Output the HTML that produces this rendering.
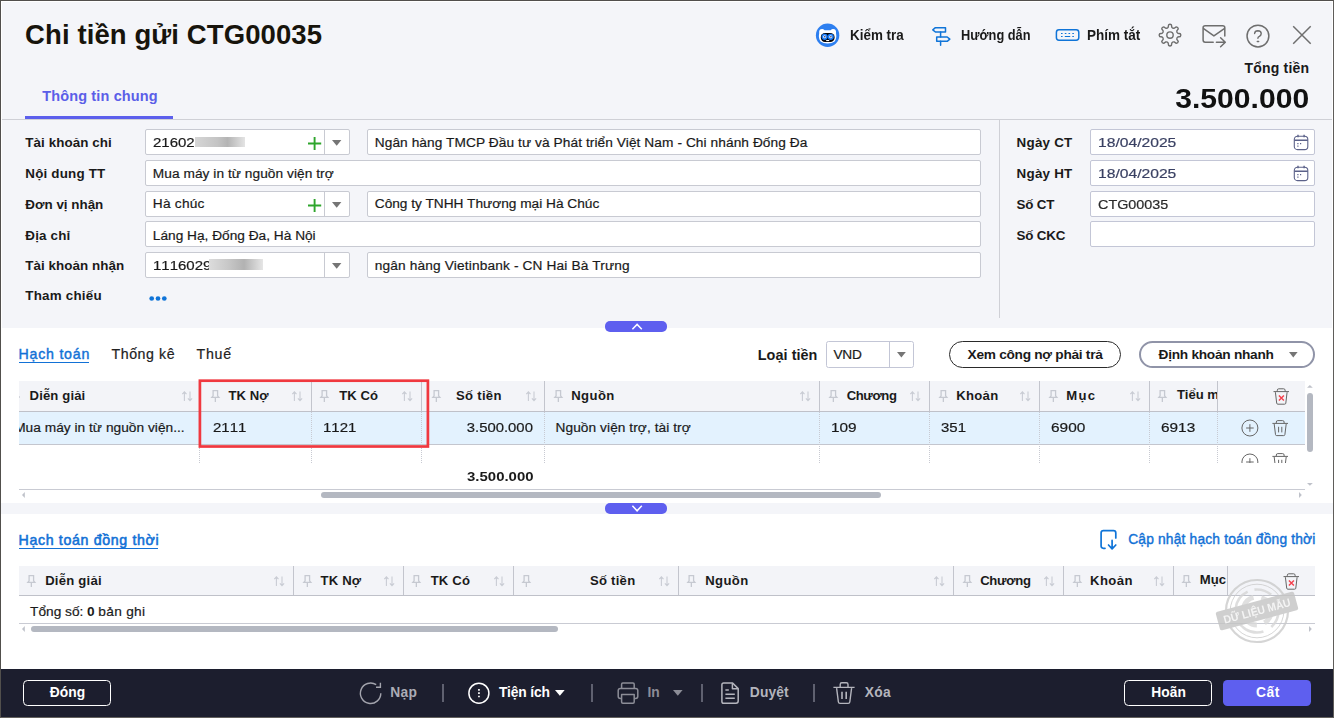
<!DOCTYPE html>
<html lang="vi">
<head>
<meta charset="utf-8">
<title>Chi tiền gửi CTG00035</title>
<style>
*{box-sizing:border-box;margin:0;padding:0}
html,body{width:1334px;height:718px;overflow:hidden;background:#fff}
body{font-family:"Liberation Sans",sans-serif;font-size:14px;color:#1a1a1a;position:relative}
.t{position:absolute;white-space:nowrap;height:20px;line-height:20px}
.n{-webkit-text-stroke:.2px}
.a{position:absolute}
.inp{position:absolute;height:26px;background:#fff;border:1px solid #c8cad2;border-radius:2px}
.ln{position:absolute;background:#c6c8d0}
svg{position:absolute;overflow:visible}
#frame{position:absolute;left:0;top:0;width:1334px;height:718px;border:1px solid #514f4c;border-right-color:#5f5d5a;border-bottom-color:#63615e;z-index:50}
#top{position:absolute;left:1px;top:1px;width:1332px;height:327px;background:#f4f5f9;border:1px solid #fff;border-bottom:none}
</style>
</head>
<body>
<div id="top"></div>
<div class="t" style="top:25px;font-size:27.5px;font-weight:bold;color:#17140c;letter-spacing:0.10px;left:25.09px;">Chi tiền gửi CTG00035</div>
<div class="t" style="top:25px;font-size:14px;font-weight:bold;left:850.39px;transform:scaleX(0.9588);transform-origin:0 50%;">Kiểm tra</div>
<div class="t" style="top:25px;font-size:14px;font-weight:bold;left:961.09px;transform:scaleX(0.9136);transform-origin:0 50%;">Hướng dẫn</div>
<div class="t" style="top:25px;font-size:14px;font-weight:bold;left:1087.19px;transform:scaleX(0.9653);transform-origin:0 50%;">Phím tắt</div>
<div class="t" style="top:58px;font-size:14px;font-weight:bold;letter-spacing:0.19px;right:24.81px;">Tổng tiền</div>
<div class="t" style="top:89px;font-size:27px;font-weight:bold;color:#111;right:24.75px;font-kerning:none;transform:scaleX(1.1143);transform-origin:100% 50%;">3.500.000</div>
<div class="t" style="top:86px;font-size:14.5px;font-weight:bold;color:#5b5ee8;letter-spacing:0.14px;left:42.18px;">Thông tin chung</div>
<div class="a" style="left:25px;top:116px;width:148px;height:3px;background:#5c5fec"></div>
<div class="ln" style="left:2px;top:119px;width:1330px;height:1px;background:#cfd0d6"></div>
<div class="t" style="top:133px;font-size:13.4px;font-weight:bold;letter-spacing:0.07px;left:25.30px;">Tài khoản chi</div>
<div class="t" style="top:164px;font-size:13.4px;font-weight:bold;letter-spacing:0.18px;left:25.30px;">Nội dung TT</div>
<div class="t" style="top:195px;font-size:13.4px;font-weight:bold;left:25.30px;">Đơn vị nhận</div>
<div class="t" style="top:226px;font-size:13.4px;font-weight:bold;letter-spacing:0.19px;left:25.30px;">Địa chỉ</div>
<div class="t" style="top:256px;font-size:13.4px;font-weight:bold;letter-spacing:0.06px;left:25.30px;">Tài khoản nhận</div>
<div class="t" style="top:286px;font-size:13.4px;font-weight:bold;letter-spacing:0.21px;left:25.30px;">Tham chiếu</div>
<div class="inp" style="left:145px;top:129px;width:205px;height:26px;border-color:#c8cad2"></div>
<div class="inp" style="left:367px;top:129px;width:614px;height:26px;border-color:#c8cad2"></div>
<div class="inp" style="left:145px;top:160px;width:836px;height:26px;border-color:#c8cad2"></div>
<div class="inp" style="left:145px;top:191px;width:205px;height:26px;border-color:#c8cad2"></div>
<div class="inp" style="left:367px;top:191px;width:614px;height:26px;border-color:#c8cad2"></div>
<div class="inp" style="left:145px;top:221.4px;width:836px;height:26px;border-color:#c8cad2"></div>
<div class="inp" style="left:145px;top:252px;width:205px;height:26px;border-color:#c8cad2"></div>
<div class="inp" style="left:367px;top:252px;width:614px;height:26px;border-color:#c8cad2"></div>
<div class="ln" style="left:324px;top:129px;width:1px;height:26px;background:#c8cad2"></div>
<svg style="left:331.5px;top:140.2px" width="10" height="6"><path d="M0 0H9.4L4.7 5.8Z" fill="#757575"/></svg>
<div class="ln" style="left:324px;top:191px;width:1px;height:26px;background:#c8cad2"></div>
<svg style="left:331.5px;top:202.2px" width="10" height="6"><path d="M0 0H9.4L4.7 5.8Z" fill="#757575"/></svg>
<div class="ln" style="left:324px;top:252px;width:1px;height:26px;background:#c8cad2"></div>
<svg style="left:331.5px;top:263.2px" width="10" height="6"><path d="M0 0H9.4L4.7 5.8Z" fill="#757575"/></svg>
<svg style="left:307px;top:135.6px" width="15" height="15"><path d="M7.6 0.9V14.1M1 7.5H14.2" stroke="#2ea52c" stroke-width="1.9" fill="none"/></svg>
<svg style="left:307px;top:197.6px" width="15" height="15"><path d="M7.6 0.9V14.1M1 7.5H14.2" stroke="#2ea52c" stroke-width="1.9" fill="none"/></svg>
<div class="t n" style="top:133px;font-size:13.7px;left:152.85px;font-kerning:none;transform:scaleX(1.0955);transform-origin:0 50%;">21602</div>
<div class="a" style="left:195px;top:137px;width:50px;height:10px;background:linear-gradient(90deg,#d6d6d6,#c4c4c4 45%,#b4b4b4 65%,#e4e4e4);filter:blur(.6px)"></div>
<div class="t n" style="top:133px;font-size:13.7px;letter-spacing:0.08px;left:374.75px;">Ngân hàng TMCP Đầu tư và Phát triển Việt Nam - Chi nhánh Đống Đa</div>
<div class="t n" style="top:164px;font-size:13.7px;letter-spacing:0.05px;left:152.85px;">Mua máy in từ nguồn viện trợ</div>
<div class="t n" style="top:194px;font-size:13.7px;letter-spacing:0.23px;left:152.85px;">Hà chúc</div>
<div class="t n" style="top:194px;font-size:13.7px;left:374.75px;">Công ty TNHH Thương mại Hà Chúc</div>
<div class="t n" style="top:226px;font-size:13.7px;left:152.85px;">Láng Hạ, Đống Đa, Hà Nội</div>
<div class="t n" style="top:256px;font-size:13.7px;left:153.15px;font-kerning:none;transform:scaleX(1.0957);transform-origin:0 50%;">1116029</div>
<div class="a" style="left:209px;top:259px;width:54px;height:11px;background:linear-gradient(90deg,#dcdcdc,#c8c8c8 35%,#b2b2b2 65%,#e6e6e6);filter:blur(.6px)"></div>
<div class="t n" style="top:256px;font-size:13.7px;letter-spacing:0.15px;left:374.75px;">ngân hàng Vietinbank - CN Hai Bà Trưng</div>
<svg style="left:148px;top:294px" width="22" height="10"><circle cx="3.7" cy="4.5" r="2.35" fill="#0f74d8"/><circle cx="10" cy="4.5" r="2.35" fill="#0f74d8"/><circle cx="16.3" cy="4.5" r="2.35" fill="#0f74d8"/></svg>
<div class="ln" style="left:999px;top:120px;width:1px;height:197.5px;background:#cfd0d6"></div>
<div class="t" style="top:133px;font-size:13.4px;font-weight:bold;letter-spacing:0.22px;left:1016.60px;">Ngày CT</div>
<div class="t" style="top:164px;font-size:13.4px;font-weight:bold;letter-spacing:0.22px;left:1016.60px;">Ngày HT</div>
<div class="t" style="top:195px;font-size:13.4px;font-weight:bold;letter-spacing:-0.23px;left:1016.60px;">Số CT</div>
<div class="t" style="top:226px;font-size:13.4px;font-weight:bold;letter-spacing:-0.21px;left:1016.60px;">Số CKC</div>
<div class="inp" style="left:1090px;top:129px;width:225px;height:26px;border-color:#c3c6d6"></div>
<div class="inp" style="left:1090px;top:160px;width:225px;height:26px;border-color:#c3c6d6"></div>
<div class="inp" style="left:1090px;top:191px;width:225px;height:26px;border-color:#c3c6d6"></div>
<div class="inp" style="left:1090px;top:221.4px;width:225px;height:26px;border-color:#c3c6d6"></div>
<div class="t n" style="top:133px;font-size:13.7px;color:#3a4163;left:1097.55px;font-kerning:none;transform:scaleX(1.1427);transform-origin:0 50%;">18/04/2025</div>
<div class="t n" style="top:164px;font-size:13.7px;color:#3a4163;left:1097.55px;font-kerning:none;transform:scaleX(1.1427);transform-origin:0 50%;">18/04/2025</div>
<div class="t n" style="top:195px;font-size:13.7px;color:#2a2a2a;left:1097.55px;transform:scaleX(1.0497);transform-origin:0 50%;">CTG00035</div>
<svg style="left:1293px;top:134px" width="16" height="17" fill="none" stroke="#5b6189" stroke-width="1.1"><rect x="1.3" y="2.2" width="13.5" height="13.4" rx="3.2"/><path d="M1.3 6.3H14.8M5 0.8V3.2M11.1 0.8V3.2" stroke-width="1.4"/><path d="M4.3 9.6h1.2M7 9.6h1.2M4.3 12.2h1.2" stroke-width="1.3"/></svg>
<svg style="left:1293px;top:165px" width="16" height="17" fill="none" stroke="#5b6189" stroke-width="1.1"><rect x="1.3" y="2.2" width="13.5" height="13.4" rx="3.2"/><path d="M1.3 6.3H14.8M5 0.8V3.2M11.1 0.8V3.2" stroke-width="1.4"/><path d="M4.3 9.6h1.2M7 9.6h1.2M4.3 12.2h1.2" stroke-width="1.3"/></svg>
<div class="a" style="left:605px;top:320.6px;width:62px;height:11.4px;border-radius:5px;background:#5e5fef"></div>
<svg style="left:631px;top:322px" width="12" height="9"><path d="M1.4 7.2L6.1 2.4L10.8 7.2" fill="none" stroke="#fff" stroke-width="1.5"/></svg>
<div class="a" style="left:1px;top:502.6px;width:1332px;height:11.2px;background:#f4f5f9"></div>
<div class="a" style="left:605px;top:502.7px;width:62px;height:11.3px;border-radius:5px;background:#5e5fef"></div>
<svg style="left:631px;top:504px" width="12" height="9"><path d="M1.4 1.8L6.1 6.8L10.8 1.8" fill="none" stroke="#fff" stroke-width="1.5"/></svg>
<div class="t n" style="top:344px;font-size:14.2px;color:#1271d6;letter-spacing:0.76px;left:18.53px;-webkit-text-stroke:0.4px #1271d6;">Hạch toán</div>
<div class="a" style="left:19px;top:362px;width:70px;height:1px;background:#1271d6"></div>
<div class="t n" style="top:344px;font-size:14.2px;color:#222;letter-spacing:0.55px;left:111.53px;">Thống kê</div>
<div class="t n" style="top:344px;font-size:14.2px;color:#222;letter-spacing:0.80px;left:196.43px;">Thuế</div>
<div class="t" style="top:345px;font-size:14.4px;font-weight:bold;letter-spacing:0.06px;left:757.78px;">Loại tiền</div>
<div class="inp" style="left:826px;top:341px;width:88px;height:27px;border-color:#c3c6d6;border-radius:2.5px"></div>
<div class="ln" style="left:889px;top:341px;width:1px;height:27px;background:#c3c6d6"></div>
<svg style="left:896.6px;top:352.4px" width="10" height="6"><path d="M0 0H8.8L4.4 5.6Z" fill="#757575"/></svg>
<div class="t n" style="top:345px;font-size:13.7px;letter-spacing:-0.21px;left:833.45px;">VND</div>
<div class="a" style="left:949px;top:341px;width:171.6px;height:26.6px;border:1.1px solid #2a2a2a;border-radius:14px;background:#fff"></div>
<div class="t" style="top:345px;font-size:13.7px;font-weight:bold;letter-spacing:-0.28px;left:967.59px;-webkit-text-stroke:0;">Xem công nợ phải trả</div>
<div class="a" style="left:1139px;top:340.8px;width:175.6px;height:27px;border:2px solid #9094a8;border-radius:14px;background:#fff"></div>
<div class="t" style="top:345px;font-size:13.7px;font-weight:bold;letter-spacing:-0.27px;left:1158.59px;">Định khoản nhanh</div>
<svg style="left:1289px;top:351.8px" width="10" height="6"><path d="M0 0H8.6L4.3 5.6Z" fill="#757575"/></svg>
<div class="a" style="left:19px;top:381px;width:1286px;height:30px;background:#f3f4f8"></div>
<div class="a" style="left:19px;top:411.6px;width:1286px;height:32.4px;background:#e3f2fe"></div>
<div class="ln" style="left:19px;top:411px;width:1286px;height:1px;background:#bfc1c9"></div>
<div class="ln" style="left:19px;top:444px;width:1286px;height:1px;background:#c4c6ce"></div>
<div class="ln" style="left:19px;top:489px;width:1286px;height:1px;background:#c9cbd3"></div>
<div class="ln" style="left:199.0px;top:381px;width:1px;height:30px;background:#c3c5cd"></div>
<div class="a" style="left:199.0px;top:412px;width:0;height:51px;border-left:1px dotted #c8cad2"></div>
<div class="ln" style="left:311.0px;top:381px;width:1px;height:30px;background:#c3c5cd"></div>
<div class="a" style="left:311.0px;top:412px;width:0;height:51px;border-left:1px dotted #c8cad2"></div>
<div class="ln" style="left:420.8px;top:381px;width:1px;height:30px;background:#c3c5cd"></div>
<div class="a" style="left:420.8px;top:412px;width:0;height:51px;border-left:1px dotted #c8cad2"></div>
<div class="ln" style="left:543.6px;top:381px;width:1px;height:30px;background:#c3c5cd"></div>
<div class="a" style="left:543.6px;top:412px;width:0;height:51px;border-left:1px dotted #c8cad2"></div>
<div class="ln" style="left:819.2px;top:381px;width:1px;height:30px;background:#c3c5cd"></div>
<div class="a" style="left:819.2px;top:412px;width:0;height:51px;border-left:1px dotted #c8cad2"></div>
<div class="ln" style="left:928.7px;top:381px;width:1px;height:30px;background:#c3c5cd"></div>
<div class="a" style="left:928.7px;top:412px;width:0;height:51px;border-left:1px dotted #c8cad2"></div>
<div class="ln" style="left:1038.9px;top:381px;width:1px;height:30px;background:#c3c5cd"></div>
<div class="a" style="left:1038.9px;top:412px;width:0;height:51px;border-left:1px dotted #c8cad2"></div>
<div class="ln" style="left:1148.8px;top:381px;width:1px;height:30px;background:#c3c5cd"></div>
<div class="a" style="left:1148.8px;top:412px;width:0;height:51px;border-left:1px dotted #c8cad2"></div>
<div class="ln" style="left:1217.0px;top:381px;width:1px;height:30px;background:#c3c5cd"></div>
<div class="a" style="left:1217.0px;top:412px;width:0;height:51px;border-left:1px dotted #c8cad2"></div>
<div class="t" style="top:386px;font-size:13.1px;font-weight:bold;letter-spacing:0.13px;left:29.60px;">Diễn giải</div>
<svg style="left:182px;top:391px" width="11" height="11" fill="none" stroke="#c9ccd4" stroke-width="1.1"><path d="M2.4 10V1M0.3 3.2L2.4 0.9L4.5 3.2M8 0.4V9.6M5.9 7.3L8 9.7L10.1 7.3"/></svg>
<svg style="left:210.8px;top:390px" width="9" height="13" fill="none" stroke="#c6c9d1" stroke-width="1.3"><path d="M2.1 0.6H6.6V5.8L7.9 7.4H0.8L2.1 5.8ZM4.35 7.4V12"/></svg>
<div class="t" style="top:386px;font-size:13.1px;font-weight:bold;letter-spacing:0.05px;left:228.40px;">TK Nợ</div>
<svg style="left:292px;top:391px" width="11" height="11" fill="none" stroke="#c9ccd4" stroke-width="1.1"><path d="M2.4 10V1M0.3 3.2L2.4 0.9L4.5 3.2M8 0.4V9.6M5.9 7.3L8 9.7L10.1 7.3"/></svg>
<svg style="left:320.4px;top:390px" width="9" height="13" fill="none" stroke="#c6c9d1" stroke-width="1.3"><path d="M2.1 0.6H6.6V5.8L7.9 7.4H0.8L2.1 5.8ZM4.35 7.4V12"/></svg>
<div class="t" style="top:386px;font-size:13.1px;font-weight:bold;letter-spacing:0.05px;left:339.30px;">TK Có</div>
<svg style="left:402.2px;top:391px" width="11" height="11" fill="none" stroke="#c9ccd4" stroke-width="1.1"><path d="M2.4 10V1M0.3 3.2L2.4 0.9L4.5 3.2M8 0.4V9.6M5.9 7.3L8 9.7L10.1 7.3"/></svg>
<svg style="left:431.5px;top:390px" width="9" height="13" fill="none" stroke="#c6c9d1" stroke-width="1.3"><path d="M2.1 0.6H6.6V5.8L7.9 7.4H0.8L2.1 5.8ZM4.35 7.4V12"/></svg>
<div class="t" style="top:386px;font-size:13.1px;font-weight:bold;letter-spacing:0.30px;left:456.00px;">Số tiền</div>
<svg style="left:525.6px;top:391px" width="11" height="11" fill="none" stroke="#c9ccd4" stroke-width="1.1"><path d="M2.4 10V1M0.3 3.2L2.4 0.9L4.5 3.2M8 0.4V9.6M5.9 7.3L8 9.7L10.1 7.3"/></svg>
<svg style="left:554px;top:390px" width="9" height="13" fill="none" stroke="#c6c9d1" stroke-width="1.3"><path d="M2.1 0.6H6.6V5.8L7.9 7.4H0.8L2.1 5.8ZM4.35 7.4V12"/></svg>
<div class="t" style="top:386px;font-size:13.1px;font-weight:bold;letter-spacing:0.42px;left:571.20px;">Nguồn</div>
<svg style="left:800px;top:391px" width="11" height="11" fill="none" stroke="#c9ccd4" stroke-width="1.1"><path d="M2.4 10V1M0.3 3.2L2.4 0.9L4.5 3.2M8 0.4V9.6M5.9 7.3L8 9.7L10.1 7.3"/></svg>
<svg style="left:828.6px;top:390px" width="9" height="13" fill="none" stroke="#c6c9d1" stroke-width="1.3"><path d="M2.1 0.6H6.6V5.8L7.9 7.4H0.8L2.1 5.8ZM4.35 7.4V12"/></svg>
<div class="t" style="top:386px;font-size:13.1px;font-weight:bold;letter-spacing:-0.40px;left:846.70px;">Chương</div>
<svg style="left:910.2px;top:391px" width="11" height="11" fill="none" stroke="#c9ccd4" stroke-width="1.1"><path d="M2.4 10V1M0.3 3.2L2.4 0.9L4.5 3.2M8 0.4V9.6M5.9 7.3L8 9.7L10.1 7.3"/></svg>
<svg style="left:938.6px;top:390px" width="9" height="13" fill="none" stroke="#c6c9d1" stroke-width="1.3"><path d="M2.1 0.6H6.6V5.8L7.9 7.4H0.8L2.1 5.8ZM4.35 7.4V12"/></svg>
<div class="t" style="top:386px;font-size:13.1px;font-weight:bold;letter-spacing:0.28px;left:956.30px;">Khoản</div>
<svg style="left:1020px;top:391px" width="11" height="11" fill="none" stroke="#c9ccd4" stroke-width="1.1"><path d="M2.4 10V1M0.3 3.2L2.4 0.9L4.5 3.2M8 0.4V9.6M5.9 7.3L8 9.7L10.1 7.3"/></svg>
<svg style="left:1048.6px;top:390px" width="9" height="13" fill="none" stroke="#c6c9d1" stroke-width="1.3"><path d="M2.1 0.6H6.6V5.8L7.9 7.4H0.8L2.1 5.8ZM4.35 7.4V12"/></svg>
<div class="t" style="top:386px;font-size:13.1px;font-weight:bold;letter-spacing:1.23px;left:1066.30px;">Mục</div>
<svg style="left:1130.2px;top:391px" width="11" height="11" fill="none" stroke="#c9ccd4" stroke-width="1.1"><path d="M2.4 10V1M0.3 3.2L2.4 0.9L4.5 3.2M8 0.4V9.6M5.9 7.3L8 9.7L10.1 7.3"/></svg>
<svg style="left:1158px;top:390px" width="9" height="13" fill="none" stroke="#c6c9d1" stroke-width="1.3"><path d="M2.1 0.6H6.6V5.8L7.9 7.4H0.8L2.1 5.8ZM4.35 7.4V12"/></svg>
<div class="a" style="left:1170px;top:382px;width:47px;height:28px;overflow:hidden"><div class="t" style="top:3px;font-size:13.1px;font-weight:bold;left:7.00px;">Tiểu mục</div></div>
<div class="a" style="left:19px;top:396px;width:1px;height:2px;background:#d4d6dd"></div>
<div class="a" style="left:19px;top:414px;width:170px;height:28px;overflow:hidden"><div class="t n" style="top:4px;font-size:13.7px;letter-spacing:0.03px;left:-4.85px;">Mua máy in từ nguồn viện...</div></div>
<div class="t n" style="top:418px;font-size:13.7px;left:213.05px;font-kerning:none;transform:scaleX(1.0966);transform-origin:0 50%;">2111</div>
<div class="t n" style="top:418px;font-size:13.7px;left:322.85px;font-kerning:none;transform:scaleX(1.0934);transform-origin:0 50%;">1121</div>
<div class="t n" style="top:418px;font-size:13.7px;right:801.42px;font-kerning:none;transform:scaleX(1.0852);transform-origin:100% 50%;">3.500.000</div>
<div class="t n" style="top:418px;font-size:13.7px;letter-spacing:0.07px;left:555.55px;">Nguồn viện trợ, tài trợ</div>
<div class="t n" style="top:418px;font-size:13.7px;left:831.05px;font-kerning:none;transform:scaleX(1.1205);transform-origin:0 50%;">109</div>
<div class="t n" style="top:418px;font-size:13.7px;left:940.95px;font-kerning:none;transform:scaleX(1.0942);transform-origin:0 50%;">351</div>
<div class="t n" style="top:418px;font-size:13.7px;left:1050.55px;font-kerning:none;transform:scaleX(1.1262);transform-origin:0 50%;">6900</div>
<div class="t n" style="top:418px;font-size:13.7px;left:1160.75px;font-kerning:none;transform:scaleX(1.1229);transform-origin:0 50%;">6913</div>
<div class="t" style="top:467px;font-size:13.4px;font-weight:bold;right:800.13px;font-kerning:none;transform:scaleX(1.1174);transform-origin:100% 50%;">3.500.000</div>
<svg style="left:0;top:0" width="1334" height="718"><rect x="199.9" y="380.7" width="228" height="65.8" fill="none" stroke="#f0383f" stroke-width="2.7"/></svg>
<svg style="left:1272.8px;top:387.6px" width="17" height="18" fill="none" stroke="#666" stroke-width="1"><path d="M0.5 3.6H16M4.3 3.4V2.2Q4.3 0.8 5.8 0.8H10.6Q12.1 0.8 12.1 2.2V3.4M2.4 4.2L3.7 15.2Q3.8 16.2 4.9 16.2H11.6Q12.7 16.2 12.8 15.2L14.1 4.2"/><path d="M5.9 7.6L10.9 12.6M10.9 7.6L5.9 12.6" stroke="#f4404c" stroke-width="1.4"/></svg>
<svg style="left:1240.5px;top:419px" width="18" height="18" fill="none" stroke="#666" stroke-width="1"><circle cx="8.9" cy="9" r="8"/><path d="M8.9 5.2V12.8M5.1 9H12.7"/></svg>
<svg style="left:1271.8px;top:419.8px" width="17" height="17" fill="none" stroke="#666" stroke-width="1"><path d="M0.4 3.4H16M4.3 3.2V2Q4.3 0.6 5.8 0.6H10.6Q12.1 0.6 12.1 2V3.2M2.2 4L3.5 14.6Q3.6 15.6 4.7 15.6H11.7Q12.8 15.6 12.9 14.6L14.2 4M6.6 6.8V12.4M9.8 6.8V12.4"/></svg>
<div class="a" style="left:1236px;top:445px;width:60px;height:17.6px;overflow:hidden"><svg style="left:4.5px;top:7.8px" width="18" height="18" fill="none" stroke="#666" stroke-width="1"><circle cx="8.9" cy="9" r="8"/><path d="M8.9 5.2V12.8M5.1 9H12.7"/></svg><svg style="left:35.8px;top:8.4px" width="17" height="17" fill="none" stroke="#666" stroke-width="1"><path d="M0.4 3.4H16M4.3 3.2V2Q4.3 0.6 5.8 0.6H10.6Q12.1 0.6 12.1 2V3.2M2.2 4L3.5 14.6Q3.6 15.6 4.7 15.6H11.7Q12.8 15.6 12.9 14.6L14.2 4M6.6 6.8V12.4M9.8 6.8V12.4"/></svg></div>
<div class="a" style="left:1307.2px;top:393px;width:5.4px;height:59px;border-radius:3px;background:#b4b8c1"></div>
<svg style="left:1307px;top:385px" width="6" height="3"><path d="M0 2.8L2.9 0L5.8 2.8Z" fill="#bfc2ca"/></svg>
<svg style="left:1307px;top:483px" width="6" height="3"><path d="M0 0L2.9 2.8L5.8 0Z" fill="#bfc2ca"/></svg>
<div class="a" style="left:321.2px;top:492.2px;width:559.6px;height:5.6px;border-radius:3px;background:#b4b8c1"></div>
<svg style="left:21.6px;top:492px" width="3" height="6"><path d="M2.8 0L0 3L2.8 6Z" fill="#bfc2ca"/></svg>
<svg style="left:1299.4px;top:492px" width="3" height="6"><path d="M0 0L2.8 3L0 6Z" fill="#bfc2ca"/></svg>
<div class="t n" style="top:530px;font-size:14.2px;color:#1271d6;letter-spacing:0.65px;left:18.53px;-webkit-text-stroke:0.55px #1271d6;">Hạch toán đồng thời</div>
<div class="a" style="left:19px;top:548px;width:139px;height:1px;background:#1271d6"></div>
<svg style="left:1099px;top:529px" width="19" height="22" fill="none" stroke="#0f74d8" stroke-width="1.7" stroke-linecap="round" stroke-linejoin="round"><path d="M6 19.3H4.4Q2.1 19.3 2.1 17V3.9Q2.1 1.6 4.4 1.6H14.5Q16.8 1.6 16.8 3.9V9"/><path d="M13.1 11.4V19.6M9.5 16L13.1 19.8L16.8 16"/></svg>
<div class="t n" style="top:530px;font-size:13.8px;color:#1271d6;letter-spacing:0.18px;left:1128.15px;-webkit-text-stroke:0.4px #1271d6;">Cập nhật hạch toán đồng thời</div>
<div class="a" style="left:19px;top:566.3px;width:1296px;height:29px;background:#f3f4f8"></div>
<div class="ln" style="left:19px;top:595.3px;width:1296px;height:1px;background:#bfc1c9"></div>
<div class="ln" style="left:19px;top:623px;width:1296px;height:1px;background:#c9cbd3"></div>
<div class="ln" style="left:293.1px;top:566.3px;width:1px;height:29px;background:#c3c5cd"></div>
<div class="ln" style="left:403.1px;top:566.3px;width:1px;height:29px;background:#c3c5cd"></div>
<div class="ln" style="left:512.9px;top:566.3px;width:1px;height:29px;background:#c3c5cd"></div>
<div class="ln" style="left:678.1px;top:566.3px;width:1px;height:29px;background:#c3c5cd"></div>
<div class="ln" style="left:953.2px;top:566.3px;width:1px;height:29px;background:#c3c5cd"></div>
<div class="ln" style="left:1063.1px;top:566.3px;width:1px;height:29px;background:#c3c5cd"></div>
<div class="ln" style="left:1173.1px;top:566.3px;width:1px;height:29px;background:#c3c5cd"></div>
<div class="ln" style="left:1227.0px;top:566.3px;width:1px;height:29px;background:#c3c5cd"></div>
<svg style="left:27.4px;top:575px" width="9" height="13" fill="none" stroke="#c6c9d1" stroke-width="1.3"><path d="M2.1 0.6H6.6V5.8L7.9 7.4H0.8L2.1 5.8ZM4.35 7.4V12"/></svg>
<div class="t" style="top:571px;font-size:13.1px;font-weight:bold;letter-spacing:0.22px;left:45.20px;">Diễn giải</div>
<svg style="left:274.2px;top:576px" width="11" height="11" fill="none" stroke="#c9ccd4" stroke-width="1.1"><path d="M2.4 10V1M0.3 3.2L2.4 0.9L4.5 3.2M8 0.4V9.6M5.9 7.3L8 9.7L10.1 7.3"/></svg>
<svg style="left:302.6px;top:575px" width="9" height="13" fill="none" stroke="#c6c9d1" stroke-width="1.3"><path d="M2.1 0.6H6.6V5.8L7.9 7.4H0.8L2.1 5.8ZM4.35 7.4V12"/></svg>
<div class="t" style="top:571px;font-size:13.1px;font-weight:bold;letter-spacing:0.17px;left:320.60px;">TK Nợ</div>
<svg style="left:384.2px;top:576px" width="11" height="11" fill="none" stroke="#c9ccd4" stroke-width="1.1"><path d="M2.4 10V1M0.3 3.2L2.4 0.9L4.5 3.2M8 0.4V9.6M5.9 7.3L8 9.7L10.1 7.3"/></svg>
<svg style="left:412.4px;top:575px" width="9" height="13" fill="none" stroke="#c6c9d1" stroke-width="1.3"><path d="M2.1 0.6H6.6V5.8L7.9 7.4H0.8L2.1 5.8ZM4.35 7.4V12"/></svg>
<div class="t" style="top:571px;font-size:13.1px;font-weight:bold;letter-spacing:0.18px;left:430.70px;">TK Có</div>
<svg style="left:493.8px;top:576px" width="11" height="11" fill="none" stroke="#c9ccd4" stroke-width="1.1"><path d="M2.4 10V1M0.3 3.2L2.4 0.9L4.5 3.2M8 0.4V9.6M5.9 7.3L8 9.7L10.1 7.3"/></svg>
<svg style="left:522.2px;top:575px" width="9" height="13" fill="none" stroke="#c6c9d1" stroke-width="1.3"><path d="M2.1 0.6H6.6V5.8L7.9 7.4H0.8L2.1 5.8ZM4.35 7.4V12"/></svg>
<div class="t" style="top:571px;font-size:13.1px;font-weight:bold;letter-spacing:0.25px;left:590.00px;">Số tiền</div>
<svg style="left:659.2px;top:576px" width="11" height="11" fill="none" stroke="#c9ccd4" stroke-width="1.1"><path d="M2.4 10V1M0.3 3.2L2.4 0.9L4.5 3.2M8 0.4V9.6M5.9 7.3L8 9.7L10.1 7.3"/></svg>
<svg style="left:687.4px;top:575px" width="9" height="13" fill="none" stroke="#c6c9d1" stroke-width="1.3"><path d="M2.1 0.6H6.6V5.8L7.9 7.4H0.8L2.1 5.8ZM4.35 7.4V12"/></svg>
<div class="t" style="top:571px;font-size:13.1px;font-weight:bold;letter-spacing:0.40px;left:705.20px;">Nguồn</div>
<svg style="left:934.2px;top:576px" width="11" height="11" fill="none" stroke="#c9ccd4" stroke-width="1.1"><path d="M2.4 10V1M0.3 3.2L2.4 0.9L4.5 3.2M8 0.4V9.6M5.9 7.3L8 9.7L10.1 7.3"/></svg>
<svg style="left:962.6px;top:575px" width="9" height="13" fill="none" stroke="#c6c9d1" stroke-width="1.3"><path d="M2.1 0.6H6.6V5.8L7.9 7.4H0.8L2.1 5.8ZM4.35 7.4V12"/></svg>
<div class="t" style="top:571px;font-size:13.1px;font-weight:bold;letter-spacing:-0.30px;left:980.20px;">Chương</div>
<svg style="left:1044.4px;top:576px" width="11" height="11" fill="none" stroke="#c9ccd4" stroke-width="1.1"><path d="M2.4 10V1M0.3 3.2L2.4 0.9L4.5 3.2M8 0.4V9.6M5.9 7.3L8 9.7L10.1 7.3"/></svg>
<svg style="left:1072.6px;top:575px" width="9" height="13" fill="none" stroke="#c6c9d1" stroke-width="1.3"><path d="M2.1 0.6H6.6V5.8L7.9 7.4H0.8L2.1 5.8ZM4.35 7.4V12"/></svg>
<div class="t" style="top:571px;font-size:13.1px;font-weight:bold;letter-spacing:0.40px;left:1090.10px;">Khoản</div>
<svg style="left:1154.2px;top:576px" width="11" height="11" fill="none" stroke="#c9ccd4" stroke-width="1.1"><path d="M2.4 10V1M0.3 3.2L2.4 0.9L4.5 3.2M8 0.4V9.6M5.9 7.3L8 9.7L10.1 7.3"/></svg>
<svg style="left:1182.4px;top:575px" width="9" height="13" fill="none" stroke="#c6c9d1" stroke-width="1.3"><path d="M2.1 0.6H6.6V5.8L7.9 7.4H0.8L2.1 5.8ZM4.35 7.4V12"/></svg>
<div class="a" style="left:1195px;top:567px;width:32px;height:28px;overflow:hidden"><div class="t" style="top:3px;font-size:13.1px;font-weight:bold;left:4.80px;">Mục</div></div>
<svg style="left:1282.6px;top:572.6px" width="17" height="18" fill="none" stroke="#666" stroke-width="1"><path d="M0.5 3.6H16M4.3 3.4V2.2Q4.3 0.8 5.8 0.8H10.6Q12.1 0.8 12.1 2.2V3.4M2.4 4.2L3.7 15.2Q3.8 16.2 4.9 16.2H11.6Q12.7 16.2 12.8 15.2L14.1 4.2"/><path d="M5.9 7.6L10.9 12.6M10.9 7.6L5.9 12.6" stroke="#f4404c" stroke-width="1.4"/></svg>
<div class="t n" style="top:602px;font-size:13.7px;left:30.05px;">Tổng số:</div>
<div class="t" style="top:602px;font-size:13.7px;font-weight:bold;left:86.99px;font-kerning:none;">0</div>
<div class="t n" style="top:602px;font-size:13.7px;letter-spacing:0.30px;left:98.35px;">bản ghi</div>
<div class="a" style="left:30.6px;top:626.3px;width:527.2px;height:5.6px;border-radius:3px;background:#b4b8c1"></div>
<svg style="left:21.6px;top:626px" width="3" height="6"><path d="M2.8 0L0 3L2.8 6Z" fill="#bfc2ca"/></svg>
<svg style="left:1309px;top:626px" width="3" height="6"><path d="M0 0L2.8 3L0 6Z" fill="#bfc2ca"/></svg>
<svg style="left:1216px;top:570px;opacity:.8" width="82" height="82" viewBox="-41 -41 82 82">
<g fill="none" stroke="#cbcbcb">
<circle r="31" stroke-width="2.2"/><circle r="26.8" stroke-width="1"/><circle r="21.5" stroke-width="2.6" stroke="#d6d6d6" stroke-dasharray="18 9 30 12 22 7"/><circle r="14" stroke-width="5" stroke="#d9d9d9" stroke-dasharray="14 8 20 6"/>
</g>
<g transform="rotate(-15)"><rect x="-40.5" y="-9.6" width="81" height="19.2" rx="2" fill="#c4c4c4"/>
<text x="0" y="4" text-anchor="middle" font-family="Liberation Sans, sans-serif" font-weight="bold"  font-size="11.3" fill="#f2f2f2" textLength="69" lengthAdjust="spacingAndGlyphs">DỮ LIỆU MẪU</text></g>
</svg>
<div class="a" style="left:1px;top:669px;width:1332px;height:48px;background:#1c1e2e"></div>
<div class="a" style="left:23px;top:679.8px;width:88px;height:26.2px;border:1.1px solid #fff;border-radius:4.5px"></div>
<div class="t" style="top:683px;font-size:13.8px;font-weight:bold;color:#fff;letter-spacing:0.08px;left:49.69px;">Đóng</div>
<svg style="left:359px;top:681px" width="24" height="24" fill="none" stroke="#a3a4ad" stroke-width="1.4"><path d="M21.8 12.2A10.2 10.2 0 1 1 17.2 3.7"/><path d="M21.4 1.8V6.2H17"/></svg>
<div class="t" style="top:683px;font-size:13.8px;font-weight:bold;color:#abacb5;letter-spacing:0.26px;left:390.29px;">Nạp</div>
<div class="a" style="left:442.1px;top:684.2px;width:1.6px;height:17.6px;background:#5f6170"></div>
<div class="a" style="left:591.1px;top:684.2px;width:1.6px;height:17.6px;background:#5f6170"></div>
<div class="a" style="left:701.3px;top:684.2px;width:1.6px;height:17.6px;background:#5f6170"></div>
<div class="a" style="left:813.3px;top:684.2px;width:1.6px;height:17.6px;background:#5f6170"></div>
<svg style="left:467px;top:681px" width="24" height="24" fill="none" stroke="#fff" stroke-width="1.5"><circle cx="11.9" cy="12.2" r="10"/><path d="M11.1 8.8h1.7M11.1 12.15h1.7M11.1 15.5h1.7" stroke-width="1.7"/></svg>
<div class="t" style="top:683px;font-size:13.8px;font-weight:bold;color:#fff;letter-spacing:-0.16px;left:499.09px;">Tiện ích</div>
<svg style="left:555.3px;top:690px" width="10" height="6"><path d="M0 0H9.7L4.85 5.7Z" fill="#fff"/></svg>
<svg style="left:617px;top:682px" width="22" height="22" fill="none" stroke="#8c8d97" stroke-width="1.5" stroke-linejoin="round"><path d="M4.6 6.4V2.2Q4.6 1 5.8 1H16Q17.2 1 17.2 2.2V6.4"/><path d="M4.4 16.4H3.4Q1.2 16.4 1.2 14.2V8.6Q1.2 6.4 3.4 6.4H18.6Q20.8 6.4 20.8 8.6V14.2Q20.8 16.4 18.6 16.4H17.4"/><path d="M4.6 12.4H17.2V20Q17.2 21.2 16 21.2H5.8Q4.6 21.2 4.6 20Z"/></svg>
<div class="t" style="top:683px;font-size:13.8px;font-weight:bold;color:#8c8d97;letter-spacing:-0.16px;left:647.59px;">In</div>
<svg style="left:673px;top:690px" width="10" height="6"><path d="M0 0H9.6L4.8 5.8Z" fill="#8c8d97"/></svg>
<svg style="left:720px;top:681px" width="20" height="24" fill="none" stroke="#b4b5bd" stroke-width="1.5" stroke-linejoin="round"><path d="M3.6 2H12.6L18.2 7.6V20Q18.2 22.2 16 22.2H3.6Q1.9 22.2 1.9 20.4V3.7Q1.9 2 3.6 2Z"/><path d="M12.4 2.2V7.8H18"/><path d="M5.4 9h3.4M5.4 13.2H14.8M5.4 17.3H14.8"/></svg>
<div class="t" style="top:683px;font-size:13.8px;font-weight:bold;color:#b4b5bd;letter-spacing:0.14px;left:749.79px;">Duyệt</div>
<svg style="left:832px;top:681px" width="24" height="24" fill="none" stroke="#b4b5bd" stroke-width="1.4" stroke-linejoin="round"><path d="M1.4 6.4H22.6M8.2 6.2V3.4Q8.2 1.8 9.8 1.8H14.4Q16 1.8 16 3.4V6.2M4.6 7.2L6.4 21Q6.6 22.4 8 22.4H16.2Q17.6 22.4 17.8 21L19.6 7.2"/><path d="M10 10.8V18M14.2 10.8V18" stroke-width="1.6"/></svg>
<div class="t" style="top:683px;font-size:13.8px;font-weight:bold;color:#b4b5bd;letter-spacing:0.25px;left:864.79px;">Xóa</div>
<div class="a" style="left:1123.7px;top:679.8px;width:88.6px;height:26.2px;border:1.1px solid #fff;border-radius:4.5px"></div>
<div class="t" style="top:683px;font-size:13.8px;font-weight:bold;color:#fff;letter-spacing:0.10px;left:1151.19px;">Hoãn</div>
<div class="a" style="left:1222.8px;top:679.8px;width:88.2px;height:26.2px;background:#5e5fef;border-radius:4.5px"></div>
<div class="t" style="top:683px;font-size:13.8px;font-weight:bold;color:#fff;letter-spacing:0.58px;left:1255.89px;">Cất</div>
<svg style="left:815px;top:23px" width="25" height="25" viewBox="815 23 25 25">
<circle cx="827.6" cy="35.3" r="11.7" fill="#2d7ff0"/>
<path d="M819.2 33.2Q818.6 28.6 822.6 28.9Q824 29 824.6 30.2H830.6Q831.2 29 832.6 28.9Q836.6 28.6 836 33.2Q837 38 834.6 41.4Q832 43.5 827.6 43.5Q823.2 43.5 820.6 41.4Q818.2 38 819.2 33.2Z" fill="#fff"/>
<rect x="820.8" y="33.1" width="13.8" height="8.8" rx="4.2" fill="#05060a"/>
<circle cx="824.6" cy="36.8" r="3.1" fill="#1a7af5"/><circle cx="830.7" cy="36.8" r="3.1" fill="#1a7af5"/>
<circle cx="824.6" cy="36.7" r="1.5" fill="#e8f1ff"/><circle cx="830.7" cy="36.7" r="1.5" fill="#e8f1ff"/>
<circle cx="824.8" cy="36.7" r=".7" fill="#1c2050"/><circle cx="830.9" cy="36.7" r=".7" fill="#1c2050"/>
<rect x="826.2" y="40" width="3" height="1.1" fill="#fff"/>
</svg>
<svg style="left:930px;top:24px" width="24" height="24" viewBox="930 24 24 24" fill="none" stroke="#0f74d8" stroke-width="1.5" stroke-linejoin="round" stroke-linecap="round">
<path d="M945.5 27.7H935.4L932.8 29.85L935.4 32H945.5Z"/><path d="M936.7 37H947.2L949.8 39.15L947.2 41.3H936.7Z"/><path d="M940.6 32V37M940.6 41.3V45.3"/>
</svg>
<svg style="left:1054px;top:27px" width="28" height="16" viewBox="1054 27 28 16" fill="none" stroke="#0f74d8">
<rect x="1056.4" y="29.8" width="22.4" height="10.4" rx="2.6" stroke-width="1.5"/>
<path d="M1061 33.5h1.6M1064.8 33.5h1.6M1068.5 33.5h1.6M1072.3 33.5h1.6M1061 36.5h1.6M1064.8 36.5h5.4M1072.3 36.5h1.6" stroke-width="1.1"/>
</svg>
<svg style="left:1157px;top:22px" width="26" height="26" viewBox="1157 22 26 26" fill="none" stroke="#6e6e6e" stroke-width="1.4" stroke-linejoin="round"><path d="M1168.62 24.79Q1170.00 23.70 1171.38 24.79L1171.87 27.32Q1172.72 28.54 1174.18 28.28L1176.31 26.83Q1178.06 27.04 1178.27 28.79L1176.82 30.92Q1176.56 32.38 1177.78 33.23L1180.31 33.72Q1181.40 35.10 1180.31 36.48L1177.78 36.97Q1176.56 37.82 1176.82 39.28L1178.27 41.41Q1178.06 43.16 1176.31 43.37L1174.18 41.92Q1172.72 41.66 1171.87 42.88L1171.38 45.41Q1170.00 46.50 1168.62 45.41L1168.13 42.88Q1167.28 41.66 1165.82 41.92L1163.69 43.37Q1161.94 43.16 1161.73 41.41L1163.18 39.28Q1163.44 37.82 1162.22 36.97L1159.69 36.48Q1158.60 35.10 1159.69 33.72L1162.22 33.23Q1163.44 32.38 1163.18 30.92L1161.73 28.79Q1161.94 27.04 1163.69 26.83L1165.82 28.28Q1167.28 28.54 1168.13 27.32Z"/><circle cx="1170" cy="35.1" r="3.2"/></svg>
<svg style="left:1200px;top:23px" width="28" height="26" viewBox="1200 23 28 26" fill="none" stroke="#6e6e6e" stroke-width="1.5" stroke-linejoin="round" stroke-linecap="round">
<path d="M1213.2 42.2H1205.2Q1203.1 42.2 1203.1 40.1V27.7Q1203.1 25.7 1205.2 25.7H1222.7Q1224.8 25.7 1224.8 27.7V36"/><path d="M1203.6 28.6L1213.9 35.9L1224.3 28.6"/><path d="M1216.4 42.2H1225.2M1220.6 37.8L1225.3 42.2L1220.6 46.7"/>
</svg>
<svg style="left:1245px;top:23px" width="26" height="26" viewBox="1245 23 26 26" fill="none" stroke="#6e6e6e" stroke-width="1.5" stroke-linecap="round">
<circle cx="1257.95" cy="36.05" r="10.9"/><path d="M1254.6 33.5Q1254.8 30.8 1257.9 30.8Q1261.2 30.9 1261.2 33.6Q1261.1 35.4 1259.4 36.4Q1257.9 37.2 1257.9 38.2" stroke-width="1.4"/><path d="M1257.3 41.6h1.3" stroke-width="1.5"/>
</svg>
<svg style="left:1291px;top:24px" width="22" height="22" viewBox="1291 24 22 22" fill="none" stroke="#6e6e6e" stroke-width="1.5"><path d="M1293.2 26.3L1310.7 43.8M1310.7 26.3L1293.2 43.8"/></svg>
<div id="frame"></div>
</body>
</html>
